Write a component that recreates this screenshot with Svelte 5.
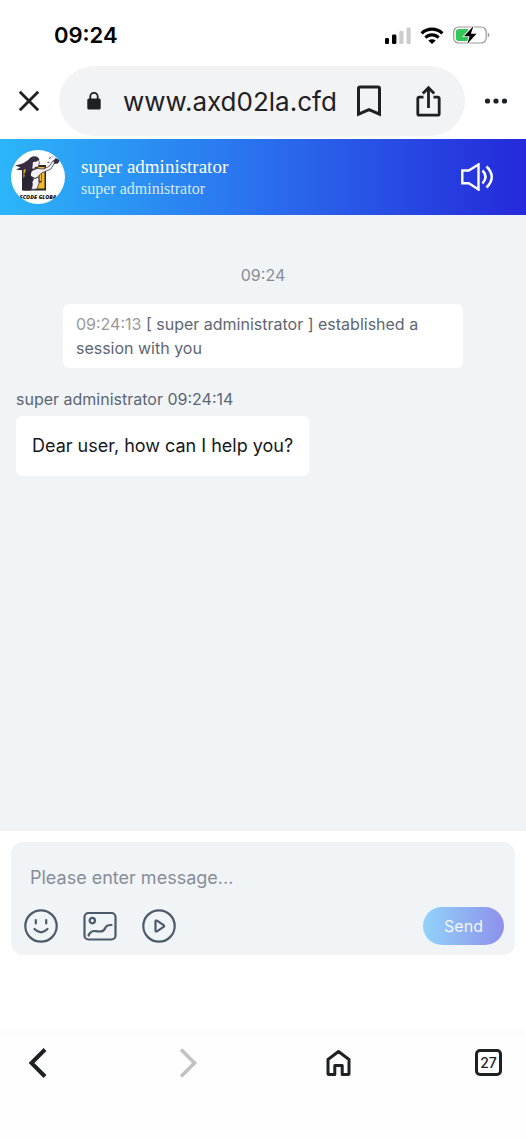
<script lang="ts">
  let url: string = 'www.axd02la.cfd';
  let draft: string = '';
  let agent: string = 'super administrator';
  let openTabs: number = 27;
</script>

<div class="screen">
  <div class="status">
    <span class="status__time">09:24</span>
    <div class="status__icons">
      <svg width="26" height="17" viewBox="0 0 26 17" aria-hidden="true">
        <rect x="0" y="11" width="4" height="6" rx="1.3" fill="#000" />
        <rect x="7" y="7.5" width="4.4" height="9.5" rx="1.3" fill="#000" />
        <rect x="14.3" y="4" width="4.2" height="13" rx="1.3" fill="#ccc" />
        <rect x="21.5" y="0.5" width="4.2" height="16.5" rx="1.3" fill="#ccc" />
      </svg>
      <svg width="24" height="17" viewBox="0 0 24 17" aria-hidden="true">
        <g fill="none" stroke="#000" stroke-width="3.2">
          <path d="M1.600 6.300a15 15 0 0 1 20.800 0" />
          <path d="M5.400 10.600a9.500 9.500 0 0 1 13.200 0" />
        </g>
        <path d="M12 17l-3.700-3.400a5.400 5.400 0 0 1 7.400 0z" fill="#000" />
      </svg>
      <svg width="37" height="18" viewBox="0 0 37 18" aria-hidden="true">
        <rect x="0.7" y="1" width="32.5" height="16" rx="5" fill="#fff" stroke="#999" stroke-width="1.2" />
        <path d="M6 3h9.500l-4 7h4.200l-1 5H6a3.200 3.200 0 0 1-3.200-3.200V6.200A3.200 3.200 0 0 1 6 3z" fill="#34c759" />
        <path d="M34.800 6.500c2 .8 2 4.200 0 5z" fill="#999" />
        <path d="M20.500 0L11 10.200h5.600L14.300 18 23.500 7.800h-5.600z" fill="#000" stroke="#fff" stroke-width="1.600" paint-order="stroke" />
      </svg>
    </div>
  </div>

  <div class="browser">
    <button class="icon-btn" aria-label="Close">
      <svg width="22" height="22" viewBox="0 0 22 22">
        <path d="M1.800 1.800l18.400 18.400M20.200 1.800L1.800 20.200" stroke="#1f2023" stroke-width="2.800" />
      </svg>
    </button>
    <div class="address">
      <svg width="14" height="18" viewBox="0 0 14 18" aria-hidden="true">
        <rect x="0.300" y="6.500" width="13.400" height="11" rx="1.600" fill="#1f2023" />
        <path d="M3.300 7V4.500a3.700 3.700 0 0 1 7.400 0V7" fill="none" stroke="#1f2023" stroke-width="1.800" />
      </svg>
      <input class="address__url" type="text" aria-label="Address" bind:value={url} />
      <div class="address__actions">
        <button class="icon-btn" aria-label="Bookmark">
          <svg width="26" height="32" viewBox="0 0 26 32">
            <path d="M2.500 29.200V3.500q0-1.500 1.500-1.500h18q1.500 0 1.500 1.500v25.700L13 24.700z" fill="none" stroke="#1f2023" stroke-width="3" />
          </svg>
        </button>
        <button class="icon-btn" aria-label="Share">
          <svg width="25" height="32" viewBox="0 0 25 32">
            <g fill="none" stroke="#1f2023" stroke-width="2.800">
              <path d="M7.500 12.200H3.300q-1.500 0-1.500 1.500v15q0 1.500 1.500 1.500h18.400q1.500 0 1.500-1.500v-15q0-1.500-1.500-1.500h-4.200" />
              <path d="M12.500 23V3.500M6.800 8.500l5.700-5.700 5.700 5.700" />
            </g>
          </svg>
        </button>
      </div>
    </div>
    <button class="icon-btn" aria-label="More">
      <svg width="24" height="6" viewBox="0 0 24 6" fill="#1f2023">
        <circle cx="3.500" cy="3" r="2.600" />
        <circle cx="12" cy="3" r="2.600" />
        <circle cx="20.500" cy="3" r="2.600" />
      </svg>
    </button>
  </div>

  <header class="header">
    <svg class="header__avatar" width="54" height="54" viewBox="0 0 54 54" aria-hidden="true">
      <rect width="54" height="54" fill="#fff" />
      <rect x="11" y="15" width="24" height="25.500" fill="#2b2433" />
      <path d="M12.500 17h4l-1 6-3 5zM27 17h6.500v21.500H26z" fill="#f3b923" />
      <path d="M27.500 20.500h3v12h-3z" fill="#2b2433" />
      <path d="M28.500 22h1.500v9h-1.500z" fill="#f3b923" />
      <!-- torso and raised arm -->
      <path d="M20 21l6-2.500 7 .5 5.500-3 3.500-5.500 2 1.500-4 7-9.500 4-3 3 .5 7-2 6-5.500.5 1-6-3-4z" fill="#f4f1f6" stroke="#40364b" stroke-width="0.800" />
      <path d="M13 24q3-4 8-4l-1.500 5 3.500 4-2 4-1 7.500h-7.500l4-9z" fill="#2b2433" />
      <path d="M21 27l3 1.500 3-1.500" fill="none" stroke="#2b2433" />
      <!-- head and hair -->
      <path d="M20 8h7l1 3.500.800 2-1 .5-.3 3-3.500.3-.5 2-3.500-1z" fill="#f4f1f6" stroke="#40364b" stroke-width="0.700" />
      <path d="M28.500 9.500q-3-5.500-9-2Q15 13.500 4 15.500l5.500 2-4.500 2q7 1.500 10-.5l-1.500 4q6.500-1 8-6l.500-5q3 .5 6.500-2.500z" fill="#382c42" />
      <path d="M42.500 11l2-3 4.500 2-2 3.500-3.500.5z" fill="#382c42" />
      <path d="M38.500 9l1-2M41 6.500l1 1M36.500 12.500l2-.5" stroke="#382c42" />
      <text x="27" y="49" text-anchor="middle" font-family="Open Sans, sans-serif" font-size="5.500" font-weight="800" font-style="italic" fill="#16131c">ECODE GLOBA</text>
    </svg>
    <div class="header__names">
      <div class="header__title">{agent}</div>
      <div class="header__subtitle">{agent}</div>
    </div>
    <button class="icon-btn" aria-label="Sound">
      <svg width="33" height="28" viewBox="0 0 33 28" fill="none" stroke="#fff" stroke-width="2.400">
        <path d="M1.300 7.500h6.500l9.700-6v25l-9.700-6.200H1.300z" />
        <path d="M21.500 7.500q6 6 0 13M25.500 3.500q10.500 10.300 0 21" stroke-width="2.500" />
      </svg>
    </button>
  </header>

  <main class="chat">
    <time class="chat__time">09:24</time>
    <p class="notice"><span class="notice__time">09:24:13</span> [ {agent} ] established a session with you</p>
    <div class="message">
      <div class="message__meta">{agent} 09:24:14</div>
      <p class="message__bubble">Dear user, how can I help you?</p>
    </div>
  </main>

  <div class="composer">
    <form class="composer__panel" onsubmit={(e) => e.preventDefault()}>
      <input class="composer__input" type="text" aria-label="Message" placeholder="Please enter message..." bind:value={draft} />
      <div class="composer__tools">
        <button type="button" class="icon-btn" aria-label="Emoji">
          <svg width="34" height="34" viewBox="0 0 34 34" fill="none" stroke="#4c5a69" stroke-width="2.200" stroke-linecap="round">
            <circle cx="17" cy="17" r="15.700" />
            <path d="M11.800 11v3.500M22.200 11v3.500M10.500 20q6.500 6.500 13 0" />
          </svg>
        </button>
        <button type="button" class="icon-btn" aria-label="Image">
          <svg width="34" height="34" viewBox="0 0 34 34" fill="none" stroke="#4c5a69" stroke-width="2.200" stroke-linecap="round">
            <rect x="1.500" y="4" width="31" height="26.500" rx="4" />
            <circle cx="9.300" cy="11.600" r="2.700" />
            <path d="M5.500 26.500c2-5 5.500-4.800 9-4.200s6.500-.3 7.500-2.800 3-3.700 6.500-3.500" />
          </svg>
        </button>
        <button type="button" class="icon-btn" aria-label="Video">
          <svg width="34" height="34" viewBox="0 0 34 34" fill="none" stroke="#4c5a69" stroke-width="2.200" stroke-linejoin="round">
            <circle cx="17" cy="17" r="15.700" />
            <path d="M13.500 12.500q0-1.500 1.500-.8l6.600 4.400q1 .9 0 1.800L15 22.300q-1.500.700-1.500-.8z" />
          </svg>
        </button>
        <button type="submit" class="send">Send</button>
      </div>
    </form>
  </div>

  <nav class="toolbar">
    <button class="icon-btn" aria-label="Back">
      <svg width="30" height="30" viewBox="0 0 30 30">
        <path d="M22 1.500L8.500 15 22 28.500" fill="none" stroke="#1f2023" stroke-width="4" />
      </svg>
    </button>
    <button class="icon-btn" aria-label="Forward">
      <svg width="30" height="30" viewBox="0 0 30 30">
        <path d="M8 1.500L21.500 15 8 28.500" fill="none" stroke="#c2c2c2" stroke-width="3.600" />
      </svg>
    </button>
    <button class="icon-btn" aria-label="Home">
      <svg width="30" height="30" viewBox="0 0 30 30">
        <path d="M4 11.500L14.500 3.500l10.500 8v14.200q0 .8-.8.800h-6V17.500h-7.400v9h-6q-.8 0-.8-.8z" fill="none" stroke="#1f2023" stroke-width="3" stroke-linejoin="round" />
      </svg>
    </button>
    <button class="icon-btn" aria-label="Tabs">
      <span class="tabs">{openTabs}</span>
    </button>
  </nav>
</div>

<style>
  :global(body) {
    margin: 0;
    background: #fff;
  }

  .screen {
    display: flex;
    flex-direction: column;
    min-height: 100vh;
    font-family: Inter, 'Liberation Sans', sans-serif;
    background: #fff;
  }

  .icon-btn {
    display: flex;
    flex: none;
    padding: 0;
    border: 0;
    background: none;
  }

  .status {
    display: flex;
    align-items: center;
    justify-content: space-between;
    padding: 20px 36px 16px 54px;
    line-height: 30px;
  }

  .status__time {
    font-size: 22px;
    font-weight: 600;
    color: #000;
  }

  .status__icons {
    display: flex;
    align-items: center;
    gap: 9px;
  }

  .browser {
    display: flex;
    align-items: center;
    gap: 19px;
    padding: 0 18px 3px;
  }

  .address {
    display: flex;
    flex: 1;
    align-items: center;
    min-width: 0;
    height: 70px;
    padding: 0 24px 0 28px;
    border-radius: 35px;
    background: #f1f3f5;
  }

  .address__url {
    flex: 1;
    min-width: 0;
    margin-left: 22px;
    padding: 0;
    border: 0;
    background: none;
    font-family: inherit;
    font-size: 26px;
    color: #1f2023;
  }

  .address__actions {
    display: flex;
    gap: 34px;
  }

  .header {
    display: flex;
    align-items: center;
    height: 76px;
    padding: 0 32px 0 11px;
    background: linear-gradient(90deg, #2cb6f9, #2a6fee 50%, #2529da);
    color: #fff;
  }

  .header__avatar {
    flex: none;
    border-radius: 50%;
  }

  .header__names {
    flex: 1;
    margin-left: 16px;
    padding-top: 2px;
    font-family: 'Liberation Serif', serif;
    line-height: 22px;
  }

  .header__title {
    font-size: 19px;
  }

  .header__subtitle {
    font-size: 16px;
    opacity: 0.8;
  }

  .chat {
    display: flex;
    flex: 1;
    flex-direction: column;
    padding: 48px 16px;
    background: #f0f4f7;
    font-size: 16px;
    line-height: 24px;
    color: #5d6671;
  }

  .chat__time {
    align-self: center;
    color: #878d94;
  }

  .notice {
    align-self: center;
    box-sizing: border-box;
    width: 81%;
    margin: 17px 0 19px;
    padding: 8px 13px;
    border-radius: 6px;
    background: #fff;
  }

  .notice__time {
    color: #999;
  }

  .message {
    display: flex;
    flex-direction: column;
    align-items: flex-start;
    gap: 5px;
  }

  .message__bubble {
    margin: 0;
    padding: 16px;
    border-radius: 6px;
    background: #fff;
    font-size: 18px;
    line-height: 28px;
    color: #15171c;
  }

  .composer {
    padding: 11px 11px 74px;
  }

  .composer__panel {
    padding: 16px 11px 10px 13px;
    border-radius: 12px;
    background: #f0f4f7;
  }

  .composer__input {
    box-sizing: border-box;
    width: 100%;
    height: 38px;
    padding: 0 6px;
    border: 0;
    background: none;
    font-family: inherit;
    font-size: 18px;
    color: #15171c;
  }

  .composer__input::placeholder {
    color: #878d96;
  }

  .composer__tools {
    display: flex;
    align-items: center;
    gap: 25px;
    margin-top: 11px;
  }

  .send {
    width: 81px;
    height: 38px;
    margin-left: auto;
    padding: 0;
    border: 0;
    border-radius: 19px;
    background: linear-gradient(90deg, #91d3fa, #8e90ea);
    font-family: inherit;
    font-size: 16px;
    color: #f2f7fe;
  }

  .toolbar {
    display: flex;
    justify-content: space-between;
    padding: 19px 23px 61px;
    background: linear-gradient(#fcfcfc 6px, #fefefe 6px);
  }

  .tabs {
    box-sizing: border-box;
    width: 27px;
    height: 27px;
    margin: 1px;
    border: 3px solid #1f2023;
    border-radius: 5px;
    font-family: Inter, 'Liberation Sans', sans-serif;
    font-size: 14px;
    font-weight: 500;
    line-height: 21px;
    text-align: center;
    color: #1f2023;
  }
</style>
